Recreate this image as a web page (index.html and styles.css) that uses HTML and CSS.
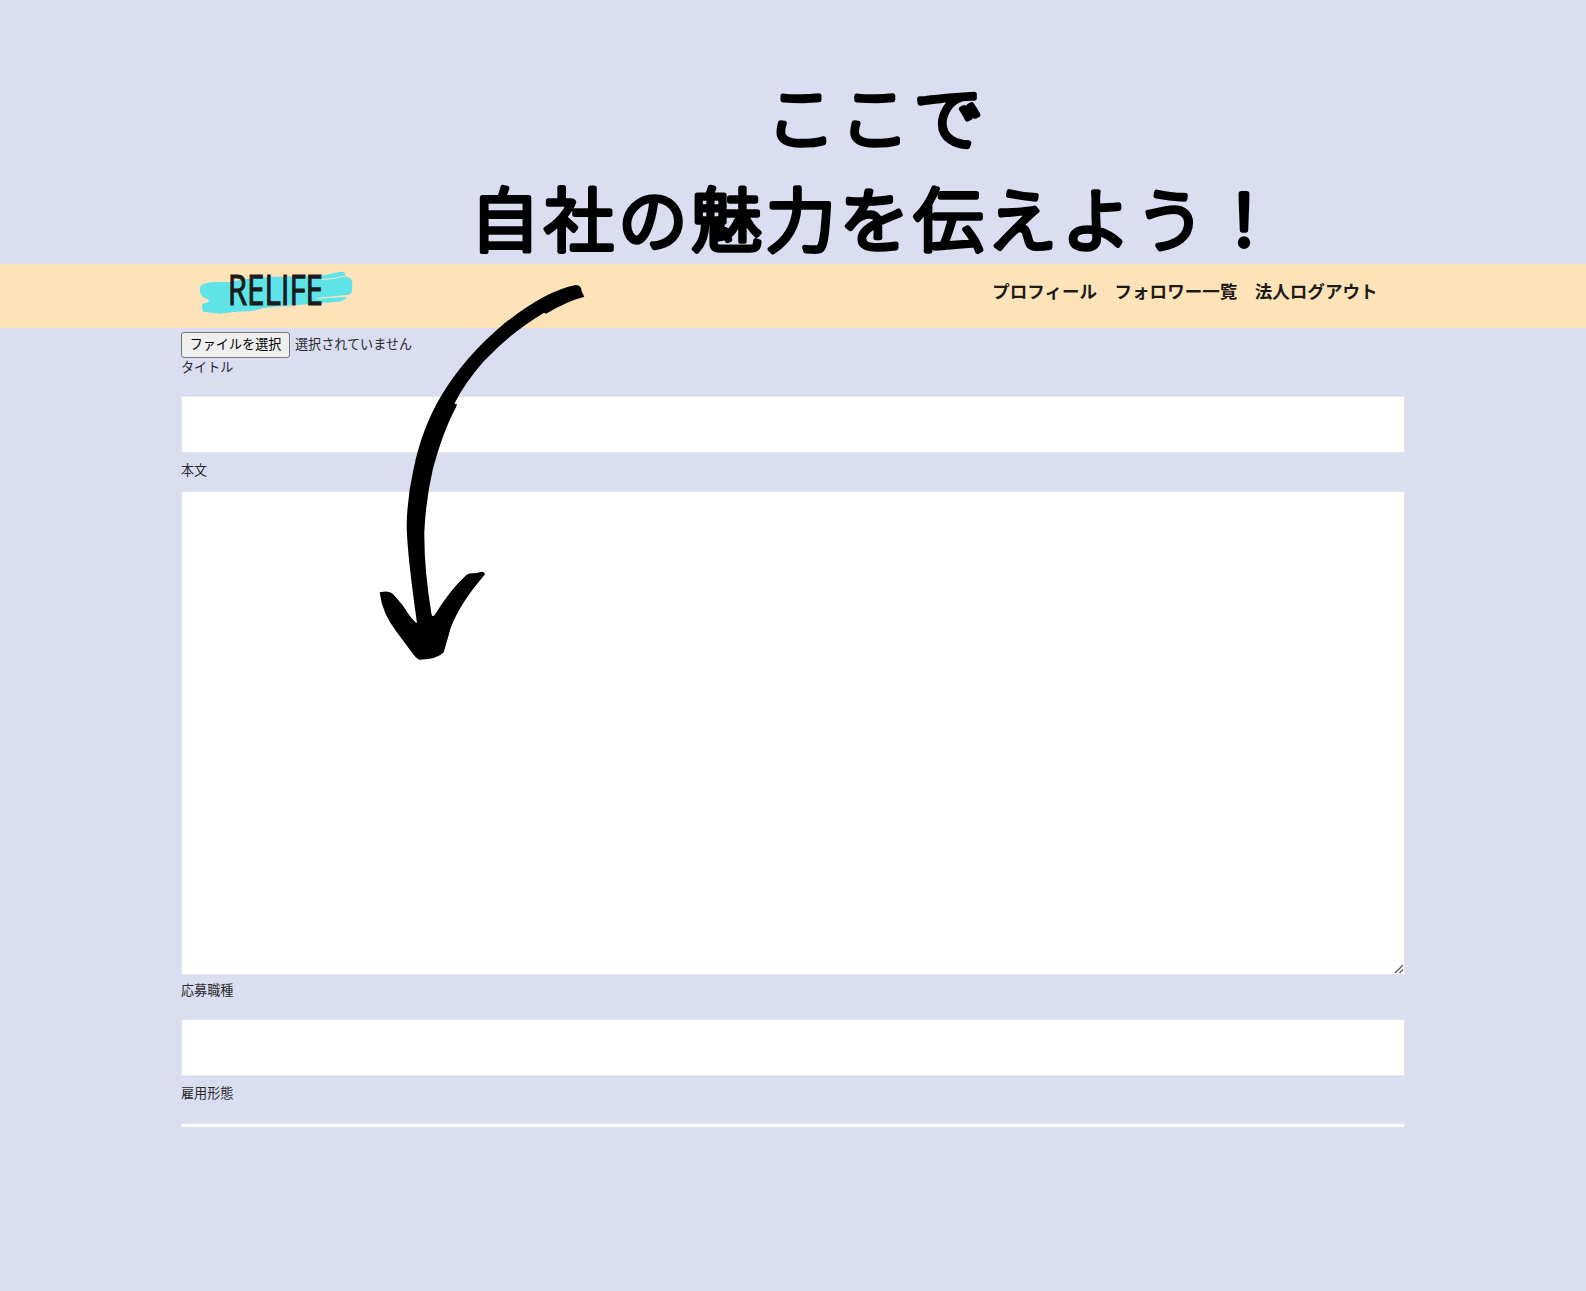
FILE: index.html
```html
<!DOCTYPE html>
<html lang="ja">
<head>
<meta charset="utf-8">
<title>RELIFE</title>
<link rel="stylesheet" href="styles.css">
</head>
<body>
<svg class="headline" viewBox="0 0 1586 263.5">
  <text x="877" y="144">ここで</text>
  <text x="877" y="246">自社の魅力を伝えよう！</text>
</svg>
<header class="header">
  <svg class="logo" viewBox="84 25 468 160">
    <path fill="#5ee3e8" d="M90 96Q92 84 124 80L176 79Q240 66 320 63L455 60L508 49Q524 46 527 57L525 62Q546 66 547 80Q548 98 545 111Q542 118 515 120L440 128L530 124Q532 128 513 137Q480 142 440 142L375 151Q330 154 275 159L240 167Q190 168 150 174L99 168Q94 155 97 144Q112 142 117 137Q118 131 105 128Q86 118 90 96Z"/>
    <path class="logo-streak" d="M455 72Q490 70 525 61M440 129Q490 123 542 119M275 160Q330 151 405 148"/>
    <text x="173" y="148" textLength="286" lengthAdjust="spacingAndGlyphs">RELIFE</text>
  </svg>
  <nav class="nav"><a>プロフィール</a><a>フォロワー一覧</a><a>法人ログアウト</a></nav>
</header>
<main class="form">
  <div class="file"><button class="file-button">ファイルを選択</button><span>選択されていません</span></div>
  <label class="label label-title">タイトル</label>
  <div class="field"></div>
  <label class="label label-body">本文</label>
  <div class="field field-body">
    <svg class="grip" viewBox="0 0 10 10"><path d="M1 9L9 1M5.500 9L9 5.500"/></svg>
  </div>
  <label class="label label-job">応募職種</label>
  <div class="field"></div>
  <label class="label label-type">雇用形態</label>
  <div class="field field-cut"></div>
</main>
<svg class="arrow" viewBox="0 0 690 1200">
  <path d="M617 45Q633 44 635 64L643 80Q590 94 528 131L522 128Q440 178 384 232L342 273Q287 335 253 401L261 402L258 412Q238 449 219 500Q204 540 188 600Q168 685 163 785Q162 900 185 1035Q188 1042 194 1035Q241 958 290 914Q298 909 315 910L337 905Q346 906 344 914Q267 1003 241 1077Q235 1100 221 1147Q203 1168 149 1169Q142 1168 132 1156L80 1086Q36 1030 29 967Q58 960 69 972L98 1006Q124 1048 139 1059Q141 1060 140 1052Q112 855 110 770Q111 685 130 600Q155 475 215 375Q285 260 400 163Q525 63 617 45Z"/>
</svg>
</body>
</html>
```
FILE: styles.css
```css
* { box-sizing: border-box; }
body {
  position: relative;
  margin: 0;
  width: 1586px;
  height: 1291px;
  overflow: hidden;
  background: #dbdef0;
  color: #292a2e;
  font-family: "Noto Sans CJK JP", sans-serif;
  font-size: 13px;
}
svg { display: block; }
.headline { width: 1586px; height: 263.5px; overflow: visible; }
.headline text {
  font-size: 69px;
  font-weight: 300;
  letter-spacing: 4.9px;
  text-anchor: middle;
  fill: #000;
  stroke: #000;
  stroke-width: 5.4px;
  stroke-linejoin: round;
}
.header {
  display: flex;
  justify-content: space-between;
  height: 64.5px;
  padding: 0 208.5px 0 198px;
  background: #fee3b9;
}
.logo { width: 156px; height: 53.3px; overflow: visible; }
.logo text {
  font-family: "Open Sans", sans-serif;
  font-size: 127px;
  fill: #1c1c1c;
  stroke: #1c1c1c;
  stroke-width: 3.5px;
}
.logo-streak { fill: none; stroke: #fee3b9; stroke-width: 3; }
.nav {
  display: flex;
  gap: 17.5px;
  padding-top: 14px;
  color: #1b1b18;
  font-size: 17.55px;
  font-weight: 700;
  line-height: 26px;
}
.form { display: flex; flex-direction: column; width: 1224px; margin-left: 181px; padding-top: 4px; }
.file { display: flex; gap: 5px; height: 26px; line-height: 23px; font-size: 13.1px; }
.file-button {
  width: 109px;
  height: 26px;
  padding: 0 0 3px;
  border: 1px solid #767676;
  border-radius: 3px;
  background: #efefef;
  color: #000;
  font: inherit;
  line-height: 21px;
}
.label { line-height: 18px; font-size: 13.1px; }
.label-title { height: 38px; }
.label-body { height: 38.500px; padding-top: 8.5px; }
.label-job { height: 44px; padding-top: 6px; }
.label-type { height: 47.200px; padding-top: 8.5px; }
.field { height: 56.500px; border: 1px solid #e6e6e6; background: #fff; }
.field-body { display: flex; align-items: flex-end; justify-content: flex-end; height: 484.200px; }
.field-cut { height: 4px; border-bottom: 0; }
.grip { width: 10px; height: 10px; }
.grip path { fill: none; stroke: #555; stroke-width: 1.2; }
.arrow { position: absolute; left: 370px; top: 270px; width: 230px; height: 400px; }
```
